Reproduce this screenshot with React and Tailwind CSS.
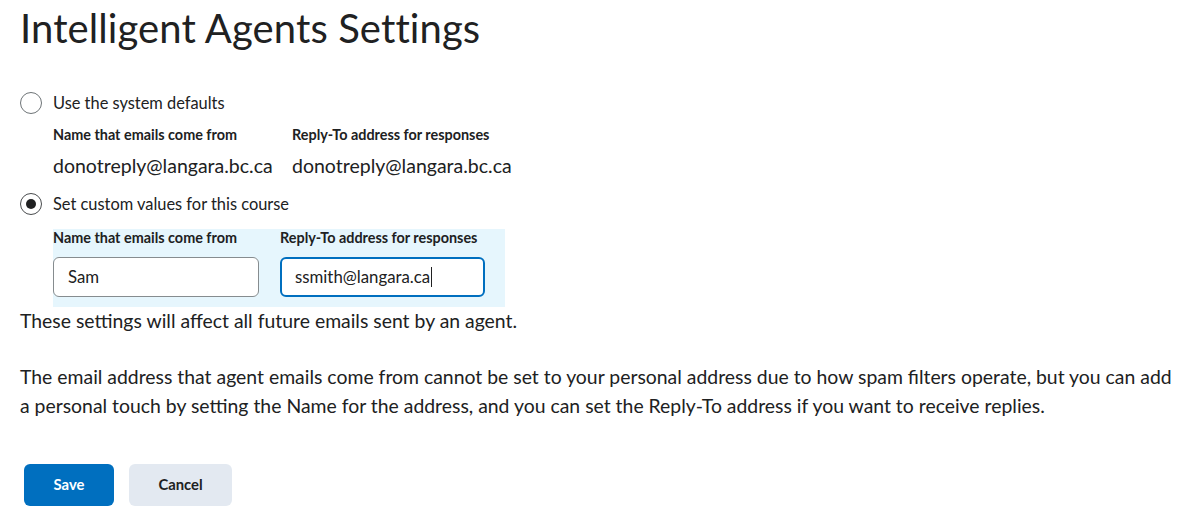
export default function App() {
  const font = { fontFamily: "Lato, 'Noto Sans', sans-serif" };
  return (
    <div className="w-[1186px] h-[517px] bg-white text-[#202122] pl-[20px] pr-[6px]" style={font}>
      <h1 className="h-[56px] flex items-center text-[40px] font-normal leading-[48px] tracking-[0.1px]">
        Intelligent Agents Settings
      </h1>

      <div className="mt-[35px] h-[24px] flex items-center">
        <span className="w-[22px] h-[22px] rounded-full border border-[#6e7477] bg-white" />
        <span className="ml-[11px] text-[16.4px]">Use the system defaults</span>
      </div>

      <div className="ml-[33px] mt-[10px] h-[20px] flex items-center text-[14.4px] font-bold">
        <span className="w-[239px]">Name that emails come from</span>
        <span>Reply-To address for responses</span>
      </div>
      <div className="ml-[33px] mt-[8px] h-[26px] flex items-center text-[19.5px]">
        <span className="w-[239px]">donotreply@langara.bc.ca</span>
        <span>donotreply@langara.bc.ca</span>
      </div>

      <div className="mt-[13px] h-[24px] flex items-center">
        <span className="w-[22px] h-[22px] rounded-full border border-[#494c4e] bg-white flex items-center justify-center">
          <span className="w-[10px] h-[10px] rounded-full bg-[#202122]" />
        </span>
        <span className="ml-[11px] text-[16.4px]">Set custom values for this course</span>
      </div>

      <div className="ml-[33px] mt-[13px] w-[452px] h-[78px] bg-[#e6f6fd] pb-[10px]">
        <div className="h-[18px] flex items-center text-[14.4px] font-bold">
          <span className="w-[227px]">Name that emails come from</span>
          <span>Reply-To address for responses</span>
        </div>
        <div className="mt-[10px] flex gap-[21px]">
          <div className="w-[206px] h-[40px] rounded-[6px] border border-[#868c8f] bg-white flex items-center pl-[14px] text-[16.8px]">
            Sam
          </div>
          <div className="w-[205px] h-[40px] rounded-[6px] border-2 border-[#006fbf] bg-white flex items-center pl-[13px] text-[16.8px]">
            ssmith@langara.ca<span className="inline-block w-px h-[20px] bg-[#202122] ml-px" />
          </div>
        </div>
      </div>

      <p className="mt-[2px] h-[24px] flex items-center text-[19.4px]">
        These settings will affect all future emails sent by an agent.
      </p>

      <p className="mt-[29px] text-[19.4px] leading-[29px]">
        The email address that agent emails come from cannot be set to your personal address due to how spam filters operate, but you can add a personal touch by setting the Name for the address, and you can set the Reply-To address if you want to receive replies.
      </p>

      <div className="mt-[44px] ml-[4px] flex gap-[15px]">
        <button className="w-[90px] h-[42px] rounded-[6px] bg-[#006fbf] text-white text-[14.8px] font-bold leading-[18px] pb-[2px]">
          Save
        </button>
        <button className="w-[103px] h-[42px] rounded-[6px] bg-[#e3e9f1] text-[#202122] text-[14.8px] font-bold leading-[18px] pb-[2px]">
          Cancel
        </button>
      </div>
    </div>
  );
}
